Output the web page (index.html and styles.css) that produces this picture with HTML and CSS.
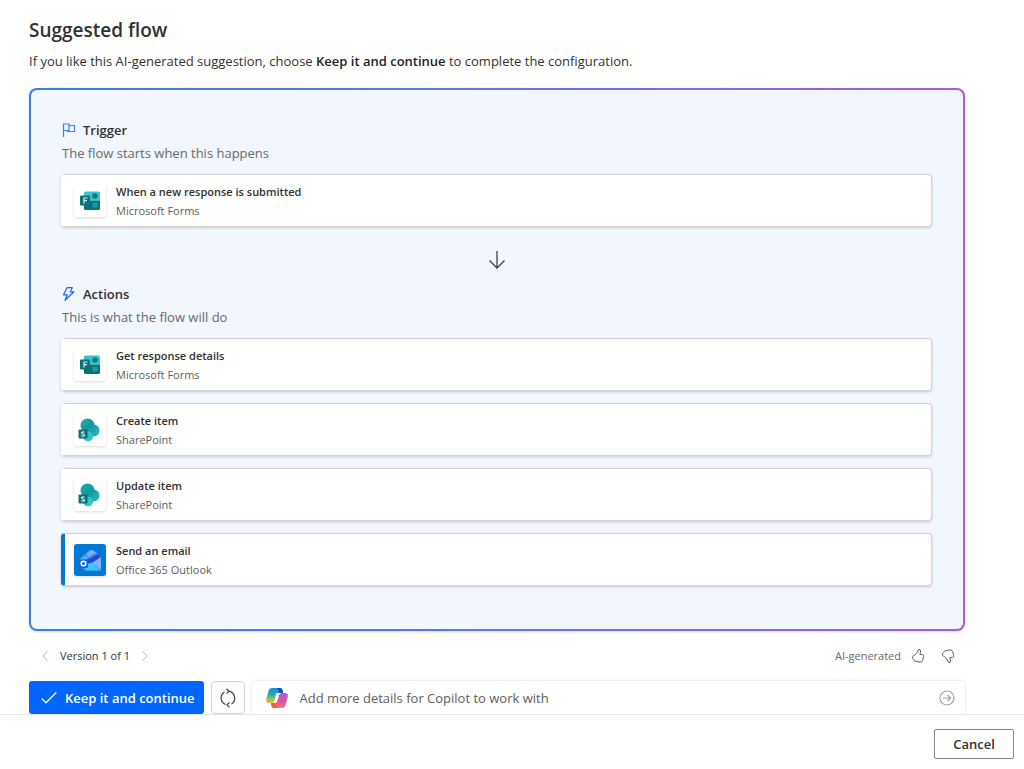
FILE: index.html
```html
<!DOCTYPE html>
<html lang="en">
<head>
    <meta charset="UTF-8">
    <meta name="viewport" content="width=device-width, initial-scale=1.0">
    <title>Suggested flow</title>
    <link rel="stylesheet" href="styles.css">
</head>
<body>
    <!-- Shared icons -->
    <svg class="icon-defs" aria-hidden="true">
        <defs>
            <linearGradient id="sp-top" x1="0" y1="0" x2="1" y2="1">
                <stop offset="0" stop-color="#23b0b8"/>
                <stop offset="1" stop-color="#0b858e"/>
            </linearGradient>
            <linearGradient id="sp-right" x1="0" y1="0" x2="1" y2="1">
                <stop offset="0" stop-color="#0f8f98"/>
                <stop offset="1" stop-color="#25bcc4"/>
            </linearGradient>
            <linearGradient id="copilot-left" x1="0" y1="0" x2="0" y2="1">
                <stop offset="0" stop-color="#1490df"/>
                <stop offset="0.4" stop-color="#27a3c4"/>
                <stop offset="0.7" stop-color="#8cc152"/>
                <stop offset="1" stop-color="#f0b92e"/>
            </linearGradient>
            <linearGradient id="copilot-right" x1="0" y1="0" x2="0" y2="1">
                <stop offset="0" stop-color="#a45de0"/>
                <stop offset="0.55" stop-color="#e0569c"/>
                <stop offset="1" stop-color="#f4717a"/>
            </linearGradient>
        </defs>
        <symbol id="icon-forms" viewBox="0 0 20 20">
            <path d="M5.500 0.500h13a1.500 1.500 0 0 1 1.500 1.500v7.500H4V2A1.500 1.500 0 0 1 5.500 0.500z" fill="#37c6d0"/>
            <path d="M4 9.500h16v8a1.500 1.500 0 0 1-1.500 1.500h-13A1.500 1.500 0 0 1 4 17.500z" fill="#07727a"/>
            <circle cx="15" cy="5" r="2.800" fill="#107c87"/>
            <rect x="12.500" y="11.500" width="5" height="5" rx="0.500" fill="#1a9ba1"/>
            <rect x="0" y="4.500" width="10" height="10" rx="1" fill="#0b737a"/>
            <path d="M4 12.500V7h3.500M4 9.700h3" fill="none" stroke="#d9eeee" stroke-width="1.200"/>
        </symbol>
        <symbol id="icon-sharepoint" viewBox="0 0 22 24">
            <circle cx="9.500" cy="7.500" r="7" fill="url(#sp-top)"/>
            <circle cx="15.500" cy="12.500" r="6" fill="url(#sp-right)"/>
            <circle cx="10" cy="18.500" r="5" fill="#2fc4cd"/>
            <rect x="0.500" y="11.500" width="9" height="9" rx="1" fill="#0a6f78"/>
            <path d="M6.600 14.400q-.6-.5-1.600-.5-1.500 0-1.500 1 0 .8 1.500 1.100 1.600.3 1.600 1.200 0 1-1.600 1-1.100 0-1.800-.6" fill="none" stroke="#d9eeee" stroke-width="1.200"/>
        </symbol>
    </svg>

    <main class="content">
        <h1>Suggested flow</h1>
        <p class="intro">If you like this AI-generated suggestion, choose <b>Keep it and continue</b> to complete the configuration.</p>

        <div class="flow-panel">
            <section>
                <h2>
                    <svg class="heading-icon" viewBox="0 0 14 14" fill="none" stroke="#3b82f6" stroke-width="1.200">
                        <path d="M1.500 14V1h5.500v6.500H1.500M7 2.500h5.500v6H5.500V7.500"/>
                    </svg>
                    Trigger
                </h2>
                <p class="section-text">The flow starts when this happens</p>
                <div class="card">
                    <div class="card-icon"><svg width="20" height="20"><use href="#icon-forms"/></svg></div>
                    <div>
                        <h3>When a new response is submitted</h3>
                        <p>Microsoft Forms</p>
                    </div>
                </div>
            </section>

            <div class="flow-arrow">
                <svg width="20" height="20" viewBox="0 0 20 20" fill="none" stroke="#424242" stroke-width="1.300">
                    <path d="M10 1v17M2.500 10.500L10 18l7.500-7.500"/>
                </svg>
            </div>

            <section>
                <h2>
                    <svg class="heading-icon" viewBox="0 0 14 14" fill="none" stroke="#2266f0" stroke-width="1.200" stroke-linejoin="round">
                        <path d="M5 0.700h5.300L8.300 4.800h3.700L3 13.300l2.200-5.500H1.500z"/>
                    </svg>
                    Actions
                </h2>
                <p class="section-text">This is what the flow will do</p>
                <div class="card-list">
                    <div class="card">
                        <div class="card-icon"><svg width="20" height="20"><use href="#icon-forms"/></svg></div>
                        <div>
                            <h3>Get response details</h3>
                            <p>Microsoft Forms</p>
                        </div>
                    </div>
                    <div class="card">
                        <div class="card-icon sharepoint"><svg width="22" height="24"><use href="#icon-sharepoint"/></svg></div>
                        <div>
                            <h3>Create item</h3>
                            <p>SharePoint</p>
                        </div>
                    </div>
                    <div class="card">
                        <div class="card-icon sharepoint"><svg width="22" height="24"><use href="#icon-sharepoint"/></svg></div>
                        <div>
                            <h3>Update item</h3>
                            <p>SharePoint</p>
                        </div>
                    </div>
                    <div class="card outlook">
                        <div class="card-icon">
                            <svg width="24" height="24" viewBox="0 0 24 24">
                                <path d="M1.500 11L9 4.500Q12.500 1 16 3l5.500 3.500L23 9v12q0 1.500-1.500 1.500H7L1.500 18z" fill="#3a8df0"/>
                                <path d="M8 6l4-3.500q1.500-1 3 0l3 2-7 4.500z" fill="#7fa8ff"/>
                                <path d="M1.500 11.500L6.500 7l4 2.500L5 13z" fill="#38b6f5"/>
                                <path d="M7 13L20 6l3 3-11 7.500z" fill="#2448cc"/>
                                <path d="M8 17l5.500-2.500 8.500 8H7z" fill="#35c9f8"/>
                                <path d="M14 15L23 9v13z" fill="#7db4ff"/>
                                <rect x="1" y="11.500" width="9" height="8.500" rx="1.500" fill="#1567cf"/>
                                <circle cx="5.500" cy="15.500" r="2.300" fill="none" stroke="#fff" stroke-width="1.500"/>
                            </svg>
                        </div>
                        <div>
                            <h3>Send an email</h3>
                            <p>Office 365 Outlook</p>
                        </div>
                    </div>
                </div>
            </section>
        </div>

        <div class="meta-row">
            <div class="version">
                <button type="button" class="icon-button" aria-label="Previous version" disabled>
                    <svg width="10" height="10" viewBox="0 0 10 10" fill="none" stroke="#b5b5b5"><path d="M7.500 0.500L3 5l4.500 4.500"/></svg>
                </button>
                <span>Version 1 of 1</span>
                <button type="button" class="icon-button" aria-label="Next version" disabled>
                    <svg width="10" height="10" viewBox="0 0 10 10" fill="none" stroke="#b5b5b5"><path d="M2.500 0.500L7 5 2.500 9.500"/></svg>
                </button>
            </div>
            <div class="feedback">
                <span>AI-generated</span>
                <button type="button" class="icon-button" aria-label="Like">
                    <svg width="14" height="16" viewBox="0 0 14 16" fill="none" stroke="#616161" stroke-linejoin="round"><path d="M7.800 1.200Q9.800 1 9.500 4L8.900 6.600h2.600q1.500.2 1.200 1.800l-1.100 4q-.6 2-2.800 1.700L3.900 13Q2.900 12.700 2.500 11.600L1.300 10q-.4-1.300.9-1.900Q5 6.800 6.300 4z"/></svg>
                </button>
                <button type="button" class="icon-button" aria-label="Dislike">
                    <svg width="14" height="16" viewBox="0 0 14 16" fill="none" stroke="#616161" stroke-linejoin="round"><path d="M7.800 14.800Q9.800 15 9.500 12L8.900 9.400h2.600q1.500-.2 1.200-1.800l-1.100-4q-.6-2-2.800-1.700L3.900 3Q2.900 3.300 2.500 4.400L1.300 6q-.4 1.300.9 1.900Q5 9.200 6.300 12z"/></svg>
                </button>
            </div>
        </div>

        <div class="action-row">
            <button type="button" class="primary-button">
                <svg width="16" height="16" viewBox="0 0 16 16" fill="none" stroke="#fff" stroke-width="1.300"><path d="M0.700 8.500l4.300 4.300L15.300 2.500"/></svg>
                Keep it and continue
            </button>
            <button type="button" class="refresh-button" aria-label="Regenerate">
                <svg width="18" height="20" viewBox="0 0 18 20" fill="none" stroke="#424242" stroke-width="1.200">
                    <path d="M5.500 4A7 7 0 0 0 6.500 16.500M12.500 16A7 7 0 0 0 9.500 3.200M7.500 0.800l2.500 2.400-2.500 2.500M10.500 14.300L8 16.800l2.500 2.500"/>
                </svg>
            </button>
            <form class="prompt">
                <svg width="22" height="20" viewBox="0 0 22 20">
                    <path d="M6 0h8q2 0 2.500 2l.7 3h-3.700q-2 0-2.600 2L9 13q-.6 2-2.500 2H3Q-.5 15 .3 11L2.500 3Q3.300 0 6 0z" fill="url(#copilot-left)"/>
                    <path d="M16 20H8q-2 0-2.500-2l-.7-3h3.700q2 0 2.600-2L13 7q.6-2 2.500-2H19q3.500 0 2.700 4l-2.200 8q-.8 3-3.500 3z" fill="url(#copilot-right)"/>
                    <path d="M11 0h3q2 0 2.500 2l.7 3h-4.700Q13 2 11 0z" fill="#1b4fbf"/>
                    <path d="M4.800 15h4q1.500 0 1.700 1.500L11 20H8q-2 0-2.500-2z" fill="#ee6044"/>
                    <path d="M10.500 5h4.500q-1.500.4-2 2l-1.900 6q-.6 2-2.300 2H7Q8 14.500 8.300 13.500L9.800 7q.2-1.300.7-2z" fill="#fff"/>
                </svg>
                <input type="text" aria-label="Add more details" placeholder="Add more details for Copilot to work with">
                <button type="submit" class="icon-button" aria-label="Send">
                    <svg width="16" height="16" viewBox="0 0 16 16" fill="none" stroke="#a3a3a3" stroke-width="1.200"><circle cx="8" cy="8" r="7"/><path d="M4 8h7.500M8.500 5l3 3-3 3"/></svg>
                </button>
            </form>
        </div>
    </main>

    <footer>
        <button type="button" class="cancel-button">Cancel</button>
    </footer>
</body>
</html>
```

FILE: styles.css
```css
* {
    margin: 0;
    padding: 0;
    box-sizing: border-box;
}
body {
    font-family: 'Open Sans', 'Noto Sans', sans-serif;
    font-size: 13px;
    line-height: 20px;
    background: #fff;
    color: #323130;
}
button,
input {
    font: inherit;
    color: inherit;
}
button {
    cursor: pointer;
}
svg {
    display: block;
    flex-shrink: 0;
}
.icon-defs {
    position: absolute;
    width: 0;
    height: 0;
}
.content {
    padding: 16px 59px 0 29px;
}
h1 {
    font-size: 19px;
    font-weight: 600;
    line-height: 28px;
    margin-bottom: 7px;
}
.intro {
    margin-bottom: 17px;
}
.intro b {
    font-weight: 600;
    color: #201f1e;
}

/* Flow panel */
.flow-panel {
    padding: 30px 31px 43px 30px;
    border: 2px solid transparent;
    border-radius: 8px;
    background:
        linear-gradient(#f1f6ff, #f1f6ff) padding-box,
        linear-gradient(90deg, #3b7de0 0%, #6a72e4 50%, #a45fd0 100%) border-box;
    box-shadow: 0 1px 3px rgba(0, 0, 0, 0.16);
}
h2 {
    display: flex;
    align-items: center;
    gap: 7px;
    font-size: 13px;
    font-weight: 600;
    margin-bottom: 3px;
}
.heading-icon {
    width: 14px;
    height: 14px;
    margin-left: 1px;
}
.section-text {
    color: #6b6967;
    padding-left: 1px;
    margin-bottom: 11px;
}
.card-list {
    display: flex;
    flex-direction: column;
    gap: 12px;
}
.card {
    display: flex;
    align-items: center;
    gap: 10px;
    height: 53px;
    padding-left: 9px;
    background: #fff;
    border: 1px solid #d2d2d2;
    border-left: 4px solid #fff;
    border-radius: 4px;
    box-shadow: 0 1px 3px rgba(0, 0, 0, 0.18);
}
.card.outlook {
    border-left-color: #0078d4;
}
.card-icon {
    display: flex;
    align-items: center;
    justify-content: center;
    width: 32px;
    height: 32px;
    border-radius: 3px;
    background: #fff;
    box-shadow: 0 1px 3px rgba(0, 0, 0, 0.14);
}
.card-icon.sharepoint {
    justify-content: flex-start;
    padding-left: 4px;
}
.outlook .card-icon {
    background: #0078d4;
}
.card h3 {
    font-size: 11px;
    font-weight: 600;
    line-height: 19px;
}
.card p {
    font-size: 11px;
    line-height: 19px;
    color: #605e5c;
}
.flow-arrow {
    display: flex;
    justify-content: center;
    padding: 23px 0 14px;
}

/* Version and feedback */
.meta-row {
    display: flex;
    align-items: center;
    justify-content: space-between;
    padding: 15px 10px 15px 11px;
    font-size: 11px;
}
.version,
.feedback {
    display: flex;
    align-items: center;
    gap: 10px;
}
.feedback {
    color: #6b6967;
}
.feedback .icon-button + .icon-button {
    margin-left: 6px;
}
.icon-button {
    display: flex;
    border: none;
    background: none;
}

/* Bottom actions */
.action-row {
    display: flex;
    gap: 7px;
    height: 33px;
}
.primary-button {
    display: flex;
    align-items: center;
    gap: 8px;
    padding: 0 9px 0 12px;
    border: none;
    border-radius: 3px;
    background: #0066ff;
    color: #fff;
    font-weight: 600;
}
.refresh-button {
    display: flex;
    align-items: center;
    justify-content: center;
    width: 34px;
    border: 1px solid #d1d1d1;
    border-radius: 4px;
    background: #fff;
}
.prompt {
    display: flex;
    flex: 1;
    align-items: center;
    gap: 12px;
    padding: 0 10px 0 14px;
    border-radius: 4px;
    box-shadow: 0 0 3px rgba(0, 0, 0, 0.16);
}
.prompt input {
    flex: 1;
    min-width: 0;
    border: none;
    outline: none;
    background: none;
}
.prompt input::placeholder {
    color: #605e5c;
    opacity: 1;
}
footer {
    position: relative;
    display: flex;
    justify-content: flex-end;
    padding: 14px 10px 10px;
    border-top: 1px solid #e8e8e8;
    background: #fff;
}
.cancel-button {
    width: 80px;
    height: 30px;
    border: 1px solid #8a8886;
    border-radius: 2px;
    background: #fff;
    font-weight: 600;
}
```
